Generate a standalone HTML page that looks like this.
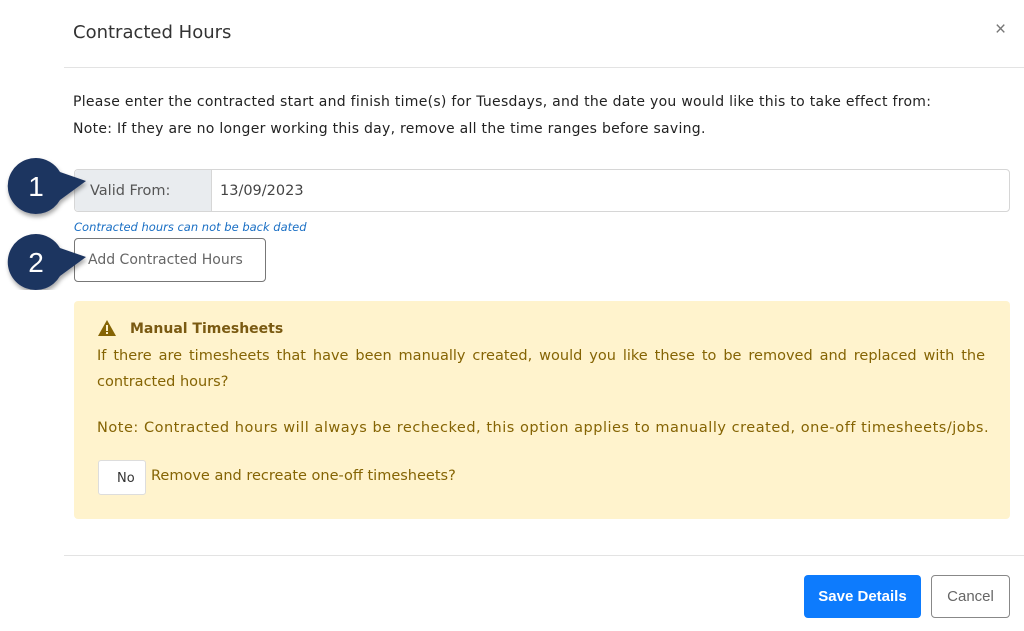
<!DOCTYPE html>
<html><head><meta charset="utf-8"><style>
*{margin:0;padding:0;box-sizing:border-box}
body{width:1024px;height:631px;background:#fff;font-family:"DejaVu Sans",sans-serif;color:#333;position:relative;overflow:hidden}
.a{position:absolute;white-space:nowrap}
</style></head><body>
<div class="a" style="left:73px;top:22px;font-size:18px;color:#333">Contracted Hours</div>
<div class="a" style="left:995px;top:19px;font-size:19px;color:#777;font-family:'Liberation Sans'">×</div>
<div class="a" style="left:64px;top:67px;width:960px;height:1px;background:#e3e3e3"></div>
<div class="a" style="left:73px;top:94px;font-size:14px;color:#222;letter-spacing:0.28px">Please enter the contracted start and finish time(s) for Tuesdays, and the date you would like this to take effect from:</div>
<div class="a" style="left:73px;top:121px;font-size:14px;color:#222;letter-spacing:0.28px">Note: If they are no longer working this day, remove all the time ranges before saving.</div>

<div class="a" style="left:74px;top:169px;width:936px;height:43px;border:1px solid #d6d6d6;border-radius:4px;background:#fff"></div>
<div class="a" style="left:75px;top:170px;width:137px;height:41px;background:#e9ecef;border-right:1px solid #d6d6d6;border-radius:4px 0 0 4px"></div>
<div class="a" style="left:90px;top:183px;font-size:14.5px;color:#555">Valid From:</div>
<div class="a" style="left:220px;top:183px;font-size:14.5px;color:#444">13/09/2023</div>
<div class="a" style="left:74px;top:220px;font-size:11.5px;color:#1a6fc4;font-style:italic">Contracted hours can not be back dated</div>
<div class="a" style="left:74px;top:238px;width:192px;height:44px;border:1px solid #777;border-radius:4px"></div>
<div class="a" style="left:88px;top:252px;font-size:14px;color:#666">Add Contracted Hours</div>

<svg class="a" style="left:0;top:150px" width="100" height="140">
<defs><filter id="s"><feDropShadow dx="1" dy="3" stdDeviation="2" flood-opacity=".35"/></filter></defs>
<g filter="url(#s)" fill="#1e3461">
<path d="M36 8 A28 28 0 1 0 60 50 L86 31 L60 22 A28 28 0 0 0 36 8Z"/>
<path d="M36 84 A28 28 0 1 0 60 126 L86 107 L60 98 A28 28 0 0 0 36 84Z"/>
</g>
<text x="36" y="46" fill="#fff" font-size="28" font-family="Liberation Sans" text-anchor="middle">1</text>
<text x="36" y="122" fill="#fff" font-size="28" font-family="Liberation Sans" text-anchor="middle">2</text>
</svg>

<div class="a" style="left:74px;top:301px;width:936px;height:218px;background:#fff3cd;border-radius:4px"></div>
<svg class="a" style="left:97px;top:319px" width="20" height="18"><path d="M10 1 L19 17 L1 17Z" fill="#856404"/><rect x="9" y="6" width="2" height="6" fill="#fff3cd"/><rect x="9" y="13" width="2" height="2" fill="#fff3cd"/></svg>
<div class="a" style="left:130px;top:321px;font-size:14px;font-weight:bold;color:#7a5a12">Manual Timesheets</div>
<div class="a" style="left:97px;top:348px;width:888px;font-size:14.5px;color:#856404;white-space:normal;text-align:justify;text-align-last:justify;height:20px;overflow:hidden">If there are timesheets that have been manually created, would you like these to be removed and replaced with the</div>
<div class="a" style="left:97px;top:374px;font-size:14.5px;color:#856404">contracted hours?</div>
<div class="a" style="left:97px;top:420px;font-size:14.5px;color:#856404;letter-spacing:0.52px">Note: Contracted hours will always be rechecked, this option applies to manually created, one-off timesheets/jobs.</div>
<div class="a" style="left:98px;top:460px;width:48px;height:35px;background:#fff;border:1px solid #ddd;border-radius:3px"></div>
<div class="a" style="left:117px;top:471px;font-size:13px;color:#333">No</div>
<div class="a" style="left:151px;top:468px;font-size:14.5px;color:#856404">Remove and recreate one-off timesheets?</div>

<div class="a" style="left:64px;top:555px;width:960px;height:1px;background:#e3e3e3"></div>
<div class="a" style="left:804px;top:575px;width:117px;height:43px;background:#0d7bfd;border-radius:4px;color:#fff;font-size:15px;font-weight:bold;text-align:center;line-height:43px;font-family:'Liberation Sans'">Save Details</div>
<div class="a" style="left:931px;top:575px;width:79px;height:43px;border:1px solid #888;border-radius:4px;color:#666;font-size:15px;text-align:center;line-height:41px;font-family:'Liberation Sans'">Cancel</div>
</body></html>
